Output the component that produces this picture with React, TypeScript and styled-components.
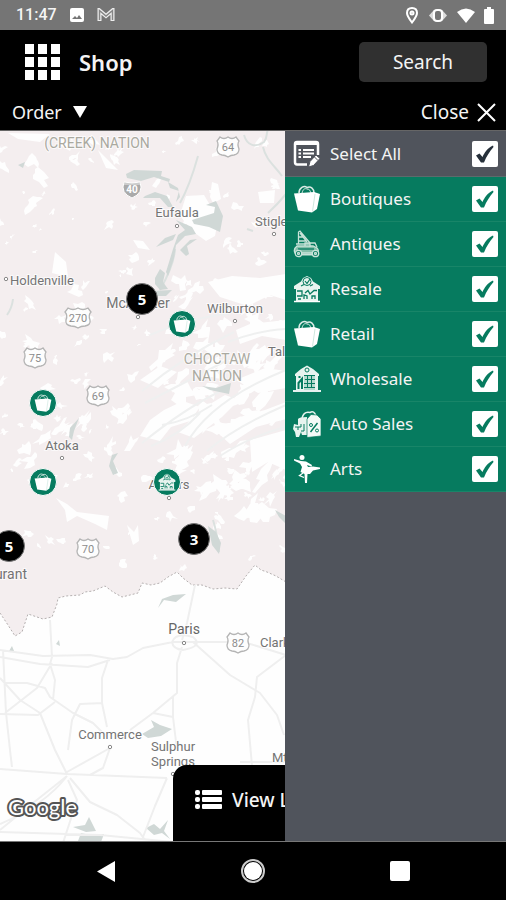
import React, { useState } from "react";
import styled, { createGlobalStyle } from "styled-components";

const GREEN = "#067b5f";
const SLATE = "#50545c";

const GlobalStyle = createGlobalStyle`
  *, *::before, *::after { box-sizing: border-box; }
  body { margin: 0; background: #000; }
  button, input { font: inherit; margin: 0; padding: 0; border: 0; }
  button { background: none; color: inherit; cursor: pointer; }
`;

const Page = styled.div`
  min-height: 100vh;
  display: flex;
  flex-direction: column;
  background: #000;
  color: #f4f4f4;
  font-family: "Noto Sans", "Open Sans", sans-serif;
`;

const StatusBar = styled.div`
  height: 30px;
  padding: 0 12px 0 16px;
  display: flex;
  align-items: center;
  justify-content: space-between;
  background: #757575;
  font: 500 16px/20px Roboto, sans-serif;
`;

const StatusGroup = styled.div<{ $gap: number }>`
  display: flex;
  align-items: center;
  gap: ${(p) => p.$gap}px;
`;

const Header = styled.header`
  height: 64px;
  padding: 0 19px 0 24px;
  display: flex;
  align-items: center;
`;

const MenuButton = styled.button`
  height: 37px;
  margin-right: 18px;
`;

const Title = styled.h1`
  margin: 0;
  flex: 1;
  font-size: 22px;
  line-height: 30px;
  font-weight: 600;
`;

const SearchButton = styled.button`
  width: 128px;
  height: 40px;
  border-radius: 5px;
  background: #303030;
  font-size: 19px;
`;

const SubBar = styled.div`
  height: 36px;
  padding: 0 10px 0 12px;
  display: flex;
  align-items: center;
  justify-content: space-between;
`;

const BarButton = styled.button<{ $gap: number; $size: number }>`
  display: flex;
  align-items: center;
  gap: ${(p) => p.$gap}px;
  font-size: ${(p) => p.$size}px;
  line-height: 26px;
`;

const Stage = styled.main`
  flex: 1;
  display: flex;
  justify-content: center;
  align-items: flex-end;
  position: relative;
  overflow: hidden;
  background: #fefefe;
  border-top: 1px solid #666;
  border-bottom: 1px solid #777;
`;

const MapCanvas = styled.svg`
  position: absolute;
  inset: 0;
  width: 100%;
  height: 100%;
`;

const Pin = styled.button<{ $x: number; $y: number; $cluster?: boolean }>`
  position: absolute;
  left: ${(p) => p.$x}px;
  top: ${(p) => p.$y}px;
  width: ${(p) => (p.$cluster ? 32 : 28)}px;
  height: ${(p) => (p.$cluster ? 32 : 28)}px;
  transform: translate(-50%, -50%);
  display: grid;
  place-items: center;
  border-radius: 50%;
  border: ${(p) => (p.$cluster ? "1px solid #777" : "1px solid #fff")};
  background: ${(p) => (p.$cluster ? "#000" : GREEN)};
  color: #fff;
  font-size: 15px;
  line-height: 20px;
  font-weight: 700;
`;

const ViewListButton = styled.button`
  position: relative;
  width: 160px;
  height: 76px;
  padding: 0 0 6px 22px;
  display: flex;
  align-items: center;
  gap: 10px;
  border-radius: 14px 14px 0 0;
  background: #000;
  font-size: 19px;
  font-weight: 500;
  white-space: nowrap;
`;

const Panel = styled.aside`
  position: absolute;
  top: 0;
  right: 0;
  bottom: 0;
  width: 221px;
  overflow-y: auto;
  background: ${SLATE};
`;

const Row = styled.label<{ $green?: boolean }>`
  height: ${(p) => (p.$green ? 45 : 46)}px;
  padding: 0 8px;
  display: flex;
  align-items: center;
  gap: 9px;
  background: ${(p) => (p.$green ? GREEN : SLATE)};
  border-bottom: 1px solid ${(p) => (p.$green ? "#188568" : "#5d6a6c")};
  cursor: pointer;
`;

const RowText = styled.span`
  flex: 1;
  font-size: 17px;
  line-height: 24px;
`;

const CheckCell = styled.span<{ $tick: string }>`
  display: grid;
  place-items: center;
  color: ${(p) => p.$tick};
  & > * { grid-area: 1 / 1; }
  svg { visibility: hidden; pointer-events: none; z-index: 1; }
  input:checked + svg { visibility: visible; }
`;

const CheckInput = styled.input`
  appearance: none;
  width: 26px;
  height: 26px;
  border-radius: 2px;
  background: #fff;
  cursor: pointer;
`;

const NavBar = styled.nav`
  height: 58px;
  padding: 0 94px;
  display: flex;
  align-items: center;
  justify-content: space-between;
`;

const NavButton = styled.button`
  display: grid;
  place-items: center;
  width: 24px;
  height: 24px;
`;

/* ---------- icons ---------- */

const BagIcon = ({ size = 28 }: { size?: number }) => (
  <svg width={size} height={size} viewBox="0 0 28 28" fill="none" aria-hidden="true">
    <path d="M6 8C6 3 11 0 14 2.500C18 1 21 4 21 8" stroke="#dcebe6" strokeWidth="1.500" />
    <path d="M9 8C10 4 12 3 14 4C17 4 17 6 18 8" stroke="#dcebe6" strokeWidth="1" />
    <path d="M1 8.500L21 7L27 9L24 24L19 27.500L5 25.500Z" fill="#fff" />
    <path d="M22 9L19.500 26.500" stroke="#b8dccf" strokeWidth=".7" />
  </svg>
);

const SelectIcon = () => (
  <svg width="28" height="28" viewBox="0 0 28 28" fill="none" stroke="#fff" aria-hidden="true">
    <path d="M25 15V4Q25 2 23 2H4Q2 2 2 4V22Q2 24.500 4 24.500H14" strokeWidth="2.500" />
    <path d="M2 3.500H25" strokeWidth="3" />
    <path d="M5.500 10H8M5.500 13.500H8M5.500 17H8M10 10H21M10 13.500H21M10 17H18" strokeWidth="2" />
    <path d="M15.500 27L17 21.500L23 15L27 18.500L20.500 25.500Z" fill="#fff" stroke={SLATE} strokeWidth="1" />
    <path d="M21.500 17L25 20.500" stroke={SLATE} strokeWidth="1" />
  </svg>
);

const AntiqueIcon = () => (
  <svg width="28" height="28" viewBox="0 0 28 28" fill="none" stroke="#c9e3d9" strokeWidth="1.300" aria-hidden="true">
    <path d="M5.500 14V2L7 1L17 13M7 3L14 12M6 7H10M5 11H13M3 14H17" />
    <path d="M4 16H20L24 18Q26 20 25 23H2Q0 19 4 16Z" fill="#84bfaa" />
    <path d="M12 16V13H22L24 17M17 13V17" />
    <path d="M5 19H21" stroke={GREEN} />
    <circle cx="5.500" cy="23.500" r="3.200" fill={GREEN} />
    <circle cx="22.500" cy="23.500" r="3.200" fill={GREEN} />
    <circle cx="5.500" cy="23.500" r="1" />
    <circle cx="22.500" cy="23.500" r="1" />
    <path d="M9 24.500H19" strokeWidth="2" />
  </svg>
);

const ResaleIcon = ({ size = 28 }: { size?: number }) => (
  <svg width={size} height={size} viewBox="0 0 28 28" fill="none" aria-hidden="true">
    <path d="M1 11L8 6.500L10 3L14 1L18 3L20 6.500L27 11V14H25V26H3V14H1Z" fill="#e8f4ef" />
    <circle cx="14" cy="6.500" r="4" stroke={GREEN} strokeWidth="1" />
    <path d="M12 6L14 8.500L17 4M8 11L11 9.500M17 11L20 9.500" stroke={GREEN} strokeWidth="1.200" />
    <path d="M4 16H9V21H4M12 18L15 15.500L17 19L21 15.500H24M11 24V20L14 21V24M19 24V21H22V24M5 24H8" stroke={GREEN} strokeWidth="1.300" />
    <path d="M1 26.500H27" stroke="#fff" strokeWidth="1.500" />
  </svg>
);

const WholesaleIcon = () => (
  <svg width="28" height="28" viewBox="0 0 28 28" fill="none" aria-hidden="true">
    <path d="M2 9L8 4L14 .500L20 4L26 9V11H25V25H3V11H2Z" fill="#e8f4ef" />
    <circle cx="14" cy="5" r="2" stroke={GREEN} />
    <path d="M11 10H22V25H11Z" fill="#b7dace" />
    <path d="M11 10.500H22M12 14.500H22M11 18.500H22M11 22.500H22M14.500 10V23M18.500 10V23" stroke={GREEN} />
    <path d="M5.500 24V18L9 14V24M6.500 13V11" stroke={GREEN} strokeWidth="2" />
    <path d="M0 26H28" stroke="#fff" strokeWidth="1.800" />
  </svg>
);

const AutoIcon = () => (
  <svg width="28" height="28" viewBox="0 0 28 28" fill="none" aria-hidden="true">
    <path d="M9 8Q11 1 17 2.500Q21 0 23 6" stroke="#e8f4ef" strokeWidth="1.500" />
    <path d="M5 9Q6 7 14 7V25H9L8 22L6 27H3L2 22L0 19L1 14L5 15Z" fill="#e8f4ef" />
    <path d="M2 17H5V20M5 17H8V14M8 21H11V14" stroke={GREEN} />
    <path d="M14 9L18 4.500L24 5L28 9V26L14 27.500Z" fill="#f4faf7" stroke={GREEN} strokeWidth=".7" />
    <path d="M17.500 22L24.500 13" stroke={GREEN} strokeWidth="1.500" />
    <circle cx="18" cy="15" r="1.500" stroke={GREEN} />
    <circle cx="24" cy="20.500" r="1.500" stroke={GREEN} />
  </svg>
);

const ArtsIcon = () => (
  <svg width="28" height="28" viewBox="0 0 28 28" fill="#fff" aria-hidden="true">
    <circle cx="9" cy="2.500" r="2.500" />
    <path d="M1 4L8 6L13 6.500L19 10L18.500 11.500L14 10L15 12L20 11.500L27 12.500V14L20 15.500L17 19L14.500 19L14 28H12L11.500 19L7.500 17L9 12L7 8.500L1 5.500Z" />
    <path d="M10 18L6.500 20.500L11 22.500" fill="none" stroke="#fff" strokeWidth="1.300" />
  </svg>
);

const TickIcon = () => (
  <svg width="20" height="20" viewBox="0 0 20 20" fill="currentColor" aria-hidden="true">
    <path d="M1 11.500L4.500 9.500L7.500 13C9.500 8.500 12.500 4 18 1.500L18.500 3C14.500 8 11.500 12 9 18.500H6Z" />
  </svg>
);

const GridIcon = () => (
  <svg width="37" height="37" viewBox="0 0 37 37" fill="#fff" aria-hidden="true">
    {[0, 13, 26].map((y) =>
      [1, 14, 27].map((x) => <rect key={`${x}-${y}`} x={x} y={y} width="9" height="10" />)
    )}
  </svg>
);

/* ---------- map ---------- */

const BORDER =
  "0,613 8,625 15,636 22,632 28,614 34,616 43,619 52,617 57,604 58,598 66,596 80,595 85,592 93,591 105,586 113,592 122,597 130,595 138,593 142,583 151,585 160,583 168,577 177,572 183,578 192,585 202,585 213,589 225,588 237,589 246,576 255,565 261,570 267,572 276,576 286,582 330,588 400,570 520,590";

const seeded = (seed: number) => () => {
  seed = (seed * 1664525 + 1013904223) % 4294967296;
  return seed / 4294967296;
};

/* Irregular clearings: x, y, width, height, count, patch radius, slant */
const CLEARINGS: number[][] = [
  [0, 135, 286, 155, 60, 4, 0],
  [0, 290, 150, 100, 28, 5, 0],
  [0, 400, 150, 60, 30, 6, -0.2],
  [0, 455, 286, 115, 38, 4, 0.2],
  [160, 350, 126, 135, 52, 9, -0.5],
  [175, 280, 111, 85, 28, 8, -0.2],
  [200, 465, 86, 80, 20, 8, -0.4],
  [0, 150, 40, 60, 5, 6, 0],
];

const clearings = (() => {
  const rnd = seeded(47);
  const out: string[] = [];
  CLEARINGS.forEach(([x, y, w, h, n, r, slant]) => {
    for (let i = 0; i < n; i++) {
      const cx = x + rnd() * w;
      const cy = y + rnd() * h;
      const size = r * (0.3 + rnd() * 1.2);
      const tilt = slant + (rnd() - 0.5) * 1.4;
      const points: string[] = [];
      for (let k = 0; k < 11; k++) {
        const a = (k / 11) * Math.PI * 2;
        const d = size * (0.3 + rnd() * 1.1);
        const px = Math.cos(a) * d;
        points.push(`${Math.round(cx + px)},${Math.round(cy + Math.sin(a) * d * 0.8 + px * tilt)}`);
      }
      out.push(points.join(" "));
    }
  });
  return out;
})();

const BIG_CLEARINGS = [
  "M8 133L50 134L40 142L18 139Z",
  "M60 138L72 146L70 151L58 144Z",
  "M98 150L108 160L118 170L106 168Z",
  "M186 196L204 195L210 205L221 199L218 184L212 182L210 197L219 215L215 236L206 241L192 231L180 215Z",
  "M258 192L275 190L274 203L260 203Z",
  "M133 240L143 241L150 250L138 248Z",
  "M55 252L66 262L68 277L52 273Z",
  "M208 282L232 276L260 278L286 274V300L270 295L248 306L220 297Z",
  "M140 436L150 420L164 410L183 401L200 407L190 421L171 427L160 441Z",
  "M178 432L202 409L225 395L239 400L222 417L194 438Z",
  "M217 432L240 417L265 410L286 402V419L256 427L230 444Z",
  "M140 380L160 366L177 372L158 388Z",
  "M236 380L265 368L286 371V388L258 393Z",
  "M236 330L250 324L286 320V340L262 336L240 344Z",
  "M250 440L286 430V470L268 462L252 472Z",
  "M56 498L67 504L77 512L109 516L107 530L95 524L77 516L67 522L65 510Z",
  "M127 525L134 532L138 525L139 541L133 545Z",
];

const LAKES = [
  "M126 174L134 170L162 171L161 176L170 179L169 182L154 177L141 181L127 178Z",
  "M168 182L178 188L180 197L176 202L179 191L170 188Z",
  "M155 192L167 196L173 207L168 207L160 198L143 198L145 196Z",
  "M192 220L214 213L215 207L206 205L216 201L223 216L220 232L209 227L194 224Z",
  "M176 220L192 227L196 234L185 236L176 245L174 258L168 276L166 272L173 249L178 235L185 230Z",
  "M156 247L165 238L176 234L173 240Z",
  "M180 250L190 240L197 239L187 246L189 254L186 256Z",
  "M155 278L160 269L165 273L163 282L168 289L160 290L155 284Z",
  "M18 165L25 162L23 168Z",
  "M202 386L216 388L231 383L229 394L210 390Z",
  "M70 428L79 418L74 431L72 440L69 437Z",
  "M112 455L118 453L113 461L118 473L113 475L109 466Z",
  "M208 526L216 532L221 543L219 554L212 545Z",
  "M275 510L286 516V524L279 517Z",
  "M158 608L162 599L173 595L186 594L176 602L164 600Z",
  "M142 734L154 727L151 720L160 725L172 729L161 736L148 738Z",
  "M73 827L85 825L89 817L96 831L86 832Z",
  "M78 841L81 833L94 836L104 834L101 842Z",
  "M146 828L154 824L160 829L168 820L164 831L170 839L162 833L154 835Z",
  "M9 651L12 646L14 651Z",
  "M56 644L59 640L60 646Z",
  "M151 291L172 290L166 296L154 296Z",
];

const STREAMS =
  "M160 290Q174 265 175 249M244 135C247 146 256 148 264 142C268 137 266 132 268 130M263 147C266 160 274 165 282 176M180 203Q190 185 198 156M286 194Q277 205 268 213M247 229L253 231M7 315Q12 308 13 299M286 515V503M213 520Q217 532 219 552";

const RIDGES =
  "M142 391Q184 356 234 332M145 403Q190 380 231 358M142 443Q184 409 219 392M151 446Q180 435 200 413M185 446Q209 401 286 370M207 451Q235 427 286 405M150 335Q192 317 229 314M220 456Q249 437 285 427M162 425Q188 421 212 405M228 342Q260 330 286 329";

const ROADS =
  "M0 650L43 656L90 655L113 659L127 657L143 648L173 642H227L247 643L286 655M0 657L40 664L88 667L110 660M50 620L52 657L50 664L55 680L53 700M3 650L6 713L10 750L12 767M0 678L20 700L40 713L55 750L67 774M52 663L37 688L5 713M0 714L38 715L55 702M5 683H27L45 688L50 697L73 713L93 723L107 737M108 660L102 678V703L107 727M103 703L80 704L72 720L68 750M182 647L177 663V693L153 713L130 730M173 697V717L177 750M153 713L173 717M193 642L230 675L260 693L277 715L284 735M286 655L257 677L255 697L248 720L252 766M195 585L187 623L182 640M0 769L67 774L167 778M110 748L67 772M110 748L103 768L90 775M67 776L33 803L0 830M70 778L90 802L117 815L140 833L147 843M68 780L77 800L63 843M167 778L155 806L143 837M0 832L100 835L173 842M0 824Q45 805 67 776M172 642Q176 632 193 637Q204 646 183 650Q173 649 172 642M240 762H286";

type LabelSpec = { x: number; y: number; text: string; anchor?: "start" | "middle" | "end"; size?: number; fill?: string };

const LABELS: LabelSpec[] = [
  { x: 97, y: 148, text: "(CREEK) NATION", size: 14, fill: "#aaa9a0" },
  { x: 217, y: 364, text: "CHOCTAW", size: 14, fill: "#aaa9a0" },
  { x: 217, y: 381, text: "NATION", size: 14, fill: "#aaa9a0" },
  { x: 177, y: 217, text: "Eufaula" },
  { x: 255, y: 226, text: "Stigler", anchor: "start" },
  { x: 10, y: 285, text: "Holdenville", anchor: "start" },
  { x: 138, y: 308, text: "McAlester", size: 14 },
  { x: 235, y: 313, text: "Wilburton" },
  { x: 268, y: 356, text: "Talihina", anchor: "start" },
  { x: 62, y: 450, text: "Atoka" },
  { x: 169, y: 489, text: "Antlers" },
  { x: 27, y: 579, text: "Durant", anchor: "end", size: 14 },
  { x: 184, y: 634, text: "Paris", size: 14, fill: "#666" },
  { x: 260, y: 647, text: "Clarksville", anchor: "start" },
  { x: 110, y: 739, text: "Commerce" },
  { x: 173, y: 751, text: "Sulphur" },
  { x: 173, y: 766, text: "Springs" },
  { x: 272, y: 762, text: "Mt Pleasant", anchor: "start" },
];

const TOWNS = [
  [177, 226], [274, 234], [6, 279], [138, 317], [235, 321], [62, 458], [169, 498], [184, 643], [110, 747], [173, 774], [194, 553],
];

const SHIELDS: [number, number, string][] = [
  [228, 147, "64"], [78, 318, "270"], [35, 358, "75"], [98, 396, "69"], [88, 549, "70"], [238, 643, "82"],
];

const Shield = ({ x, y, text }: { x: number; y: number; text: string }) => (
  <g transform={`translate(${x} ${y})`}>
    <path
      d={
        text.length > 2
          ? "M-10 -10Q-5 -7 0 -10Q5 -7 10 -10L13 -6Q10 -3 12 2Q13 7 7 8Q3 8 0 10Q-3 8 -7 8Q-13 7 -12 2Q-10 -3 -13 -6Z"
          : "M-8 -10Q-4 -7 0 -10Q4 -7 8 -10L11 -6Q9 -3 11 2Q11 7 6 8Q3 8 0 10Q-3 8 -6 8Q-11 7 -11 2Q-9 -3 -11 -6Z"
      }
      fill="#fdfdfd"
      stroke="#b4b4b4"
      strokeWidth="1.300"
    />
    <text y="4" textAnchor="middle" fontSize="11" fill="#8c8c8c">{text}</text>
  </g>
);

const RegionMap = () => (
  <MapCanvas role="img" aria-label="Map of shops" fontFamily="Roboto, sans-serif">
    <g transform="translate(0 -131)">
      <polygon points={`0,130 520,130 520,590 ${BORDER.split(" ").reverse().join(" ")}`} fill="#f4eeef" />
      <g fill="#fefefe">
        {clearings.map((points, i) => <polygon key={i} points={points} />)}
        {BIG_CLEARINGS.map((d) => <path key={d} d={d} />)}
      </g>
      <path d={RIDGES} fill="none" stroke="#eff0f0" strokeWidth="2" />
      <path d={STREAMS} fill="none" stroke="#dbe1df" strokeWidth="2" />
      <g fill="#d0d8d6">{LAKES.map((d) => <path key={d} d={d} />)}</g>
      <polyline points={BORDER} fill="none" stroke="#b5b0b0" strokeWidth="1" strokeDasharray="2 2" />
      <path d={ROADS} fill="none" stroke="#efefef" strokeWidth="2" strokeLinejoin="round" />
      <g fill="#fff" stroke="#888" strokeWidth="1">
        {TOWNS.map(([x, y]) => <circle key={`${x}-${y}`} cx={x} cy={y} r="1.700" />)}
      </g>
      {SHIELDS.map(([x, y, text]) => <Shield key={text} x={x} y={y} text={text} />)}
      <g transform="translate(132 189)">
        <path d="M-8 -7Q0 -5 8 -7Q12 4 0 9Q-12 4 -8 -7Z" fill="#aaa" stroke="#fff" />
        <path d="M-8 -5H8" stroke="#eee" />
        <text y="4" textAnchor="middle" fontSize="10" fontWeight="700" fill="#fff">40</text>
      </g>
      {LABELS.map((l) => (
        <text
          key={l.text + l.y}
          x={l.x}
          y={l.y}
          textAnchor={l.anchor ?? "middle"}
          fontSize={l.size ?? 13}
          fill={l.fill ?? "#747474"}
          stroke="#fff"
          strokeWidth="2"
          strokeOpacity=".7"
          paintOrder="stroke"
        >
          {l.text}
        </text>
      ))}
      <text x="8" y="815" fontFamily="Lato, sans-serif" fontSize="22" fontWeight="400" fill="#fff" stroke="#555" strokeWidth="4" strokeLinejoin="round" paintOrder="stroke">
        Google
      </text>
    </g>
  </MapCanvas>
);

/* ---------- page ---------- */

const CATEGORIES = [
  { name: "Boutiques", Icon: BagIcon },
  { name: "Antiques", Icon: AntiqueIcon },
  { name: "Resale", Icon: ResaleIcon },
  { name: "Retail", Icon: BagIcon },
  { name: "Wholesale", Icon: WholesaleIcon },
  { name: "Auto Sales", Icon: AutoIcon },
  { name: "Arts", Icon: ArtsIcon },
];

const CLUSTERS = [
  { x: 142, y: 168, count: 5 },
  { x: 194, y: 408, count: 3 },
  { x: 9, y: 415, count: 5 },
];

const SHOPS = [
  { x: 182, y: 193, Icon: BagIcon },
  { x: 43, y: 272, Icon: BagIcon },
  { x: 43, y: 351, Icon: BagIcon },
  { x: 167, y: 351, Icon: ResaleIcon },
];

export default function App() {
  const [picked, setPicked] = useState<string[]>(CATEGORIES.map((c) => c.name));
  const [open, setOpen] = useState(true);
  const all = picked.length === CATEGORIES.length;
  const toggle = (name: string) =>
    setPicked((now) => (now.includes(name) ? now.filter((n) => n !== name) : [...now, name]));

  return (
    <Page>
      <GlobalStyle />
      <StatusBar>
        <StatusGroup $gap={13}>
          <span>11:47</span>
          <svg width="14" height="14" viewBox="0 0 14 14" aria-hidden="true">
            <rect width="14" height="14" rx="2" fill="#fff" />
            <path d="M2 11L5 8L7 10L9 7L12 11Z" fill="#757575" />
          </svg>
          <svg width="18" height="14" viewBox="0 0 18 14" fill="none" aria-hidden="true">
            <path d="M2.500 13V2.500L9 8L15.500 2.500V13" stroke="#eee" strokeWidth="4" />
            <path d="M2.500 12V2.500L9 8L15.500 2.500V12" stroke="#858585" strokeWidth="1.500" />
          </svg>
        </StatusGroup>
        <StatusGroup $gap={9}>
          <svg width="14" height="17" viewBox="0 0 14 17" fill="none" stroke="#fff" strokeWidth="2" aria-hidden="true">
            <path d="M7 15.500Q2 9 2 6Q2 1 7 1Q12 1 12 6Q12 9 7 15.500Z" />
            <circle cx="7" cy="6" r="1.500" />
          </svg>
          <svg width="20" height="15" viewBox="0 0 20 15" fill="none" aria-hidden="true">
            <path d="M6 2H14L19 7.500L14 13H6L1 7.500Z" fill="#ddd" />
            <rect x="6" y="2" width="8" height="11" rx="3" fill="#777" stroke="#fff" strokeWidth="2" />
          </svg>
          <svg width="18" height="15" viewBox="0 0 18 15" fill="#fff" aria-hidden="true">
            <path d="M0 4Q9 -3 18 4L9 15Z" />
          </svg>
          <svg width="10" height="17" viewBox="0 0 10 17" fill="#fff" aria-hidden="true">
            <path d="M3 0H7V2H9Q10 2 10 3V16Q10 17 9 17H1Q0 17 0 16V3Q0 2 1 2H3Z" />
          </svg>
        </StatusGroup>
      </StatusBar>

      <Header>
        <MenuButton aria-label="Menu"><GridIcon /></MenuButton>
        <Title>Shop</Title>
        <SearchButton>Search</SearchButton>
      </Header>

      <SubBar>
        <BarButton $gap={11} $size={18}>
          Order
          <svg width="14" height="12" viewBox="0 0 14 12" fill="#fff" aria-hidden="true"><path d="M0 0H14L7 12Z" /></svg>
        </BarButton>
        <BarButton $gap={8} $size={19} onClick={() => setOpen((v) => !v)}>
          Close
          <svg width="19" height="19" viewBox="0 0 19 19" stroke="#fff" strokeWidth="2" aria-hidden="true">
            <path d="M1 1L18 18M18 1L1 18" />
          </svg>
        </BarButton>
      </SubBar>

      <Stage>
        <RegionMap />
        {CLUSTERS.map((c) => (
          <Pin key={c.x} $x={c.x} $y={c.y} $cluster>{c.count}</Pin>
        ))}
        {SHOPS.map(({ x, y, Icon }) => (
          <Pin key={`${x}-${y}`} $x={x} $y={y} aria-label="Shop"><Icon size={18} /></Pin>
        ))}
        <ViewListButton>
          <svg width="27" height="20" viewBox="0 0 27 20" fill="#fff" aria-hidden="true">
            {[0, 7, 14].map((y) => (
              <g key={y}>
                <rect y={y} width="5" height="5" rx="2" />
                <rect x="7" y={y} width="20" height="5" rx="1" />
              </g>
            ))}
          </svg>
          View List
        </ViewListButton>
        {open && (
          <Panel>
            <Row>
              <SelectIcon />
              <RowText>Select All</RowText>
              <CheckCell $tick="#26303a">
                <CheckInput
                  type="checkbox"
                  checked={all}
                  onChange={() => setPicked(all ? [] : CATEGORIES.map((c) => c.name))}
                />
                <TickIcon />
              </CheckCell>
            </Row>
            {CATEGORIES.map(({ name, Icon }) => (
              <Row key={name} $green>
                <Icon />
                <RowText>{name}</RowText>
                <CheckCell $tick={GREEN}>
                  <CheckInput type="checkbox" checked={picked.includes(name)} onChange={() => toggle(name)} />
                  <TickIcon />
                </CheckCell>
              </Row>
            ))}
          </Panel>
        )}
      </Stage>

      <NavBar>
        <NavButton aria-label="Back">
          <svg width="18" height="21" viewBox="0 0 18 21" fill="#fff" aria-hidden="true"><path d="M18 0V21L0 10.500Z" /></svg>
        </NavButton>
        <NavButton aria-label="Home">
          <svg width="24" height="24" viewBox="0 0 24 24" aria-hidden="true">
            <circle cx="12" cy="12" r="11" fill="#000" stroke="#ccc" strokeWidth="2" />
            <circle cx="12" cy="12" r="9" fill="#fff" />
          </svg>
        </NavButton>
        <NavButton aria-label="Recent apps">
          <svg width="20" height="20" viewBox="0 0 20 20" aria-hidden="true"><rect width="20" height="20" rx="2" fill="#fff" /></svg>
        </NavButton>
      </NavBar>
    </Page>
  );
}
